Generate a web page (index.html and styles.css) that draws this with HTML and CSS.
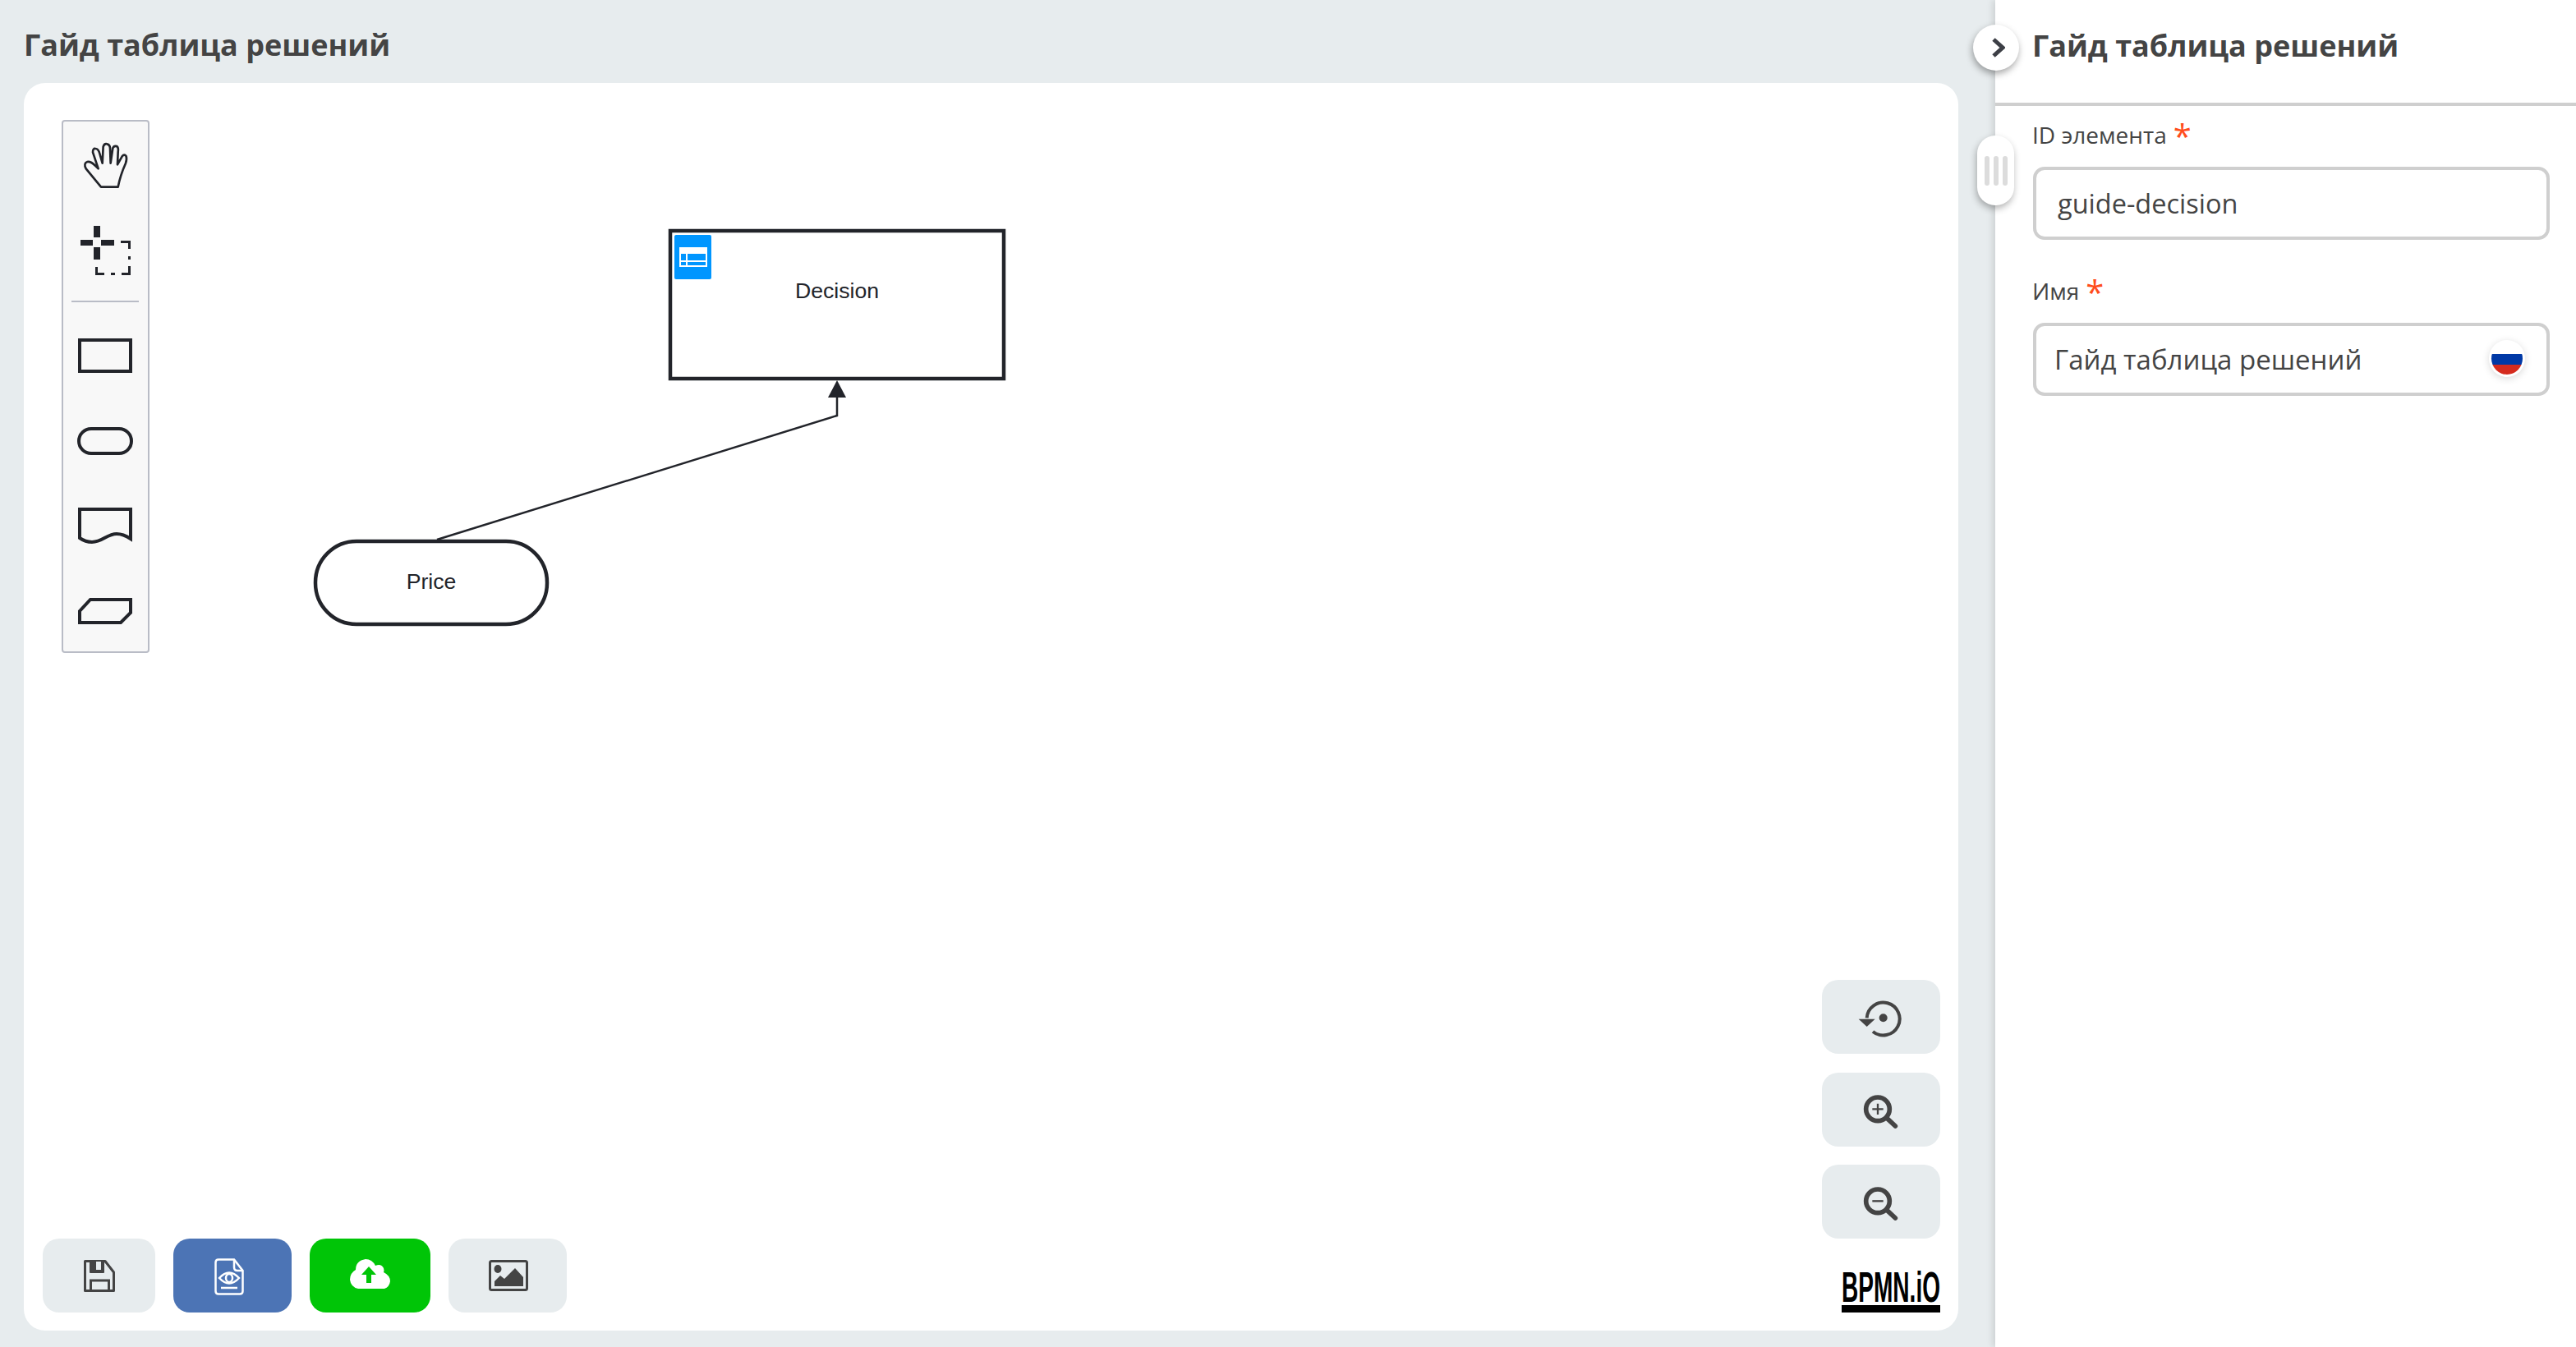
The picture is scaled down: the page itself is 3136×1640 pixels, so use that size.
FILE: index.html
```html
<!DOCTYPE html>
<html lang="ru">
<head>
    <meta charset="UTF-8">
    <meta name="viewport" content="width=device-width, initial-scale=1.0">
    <title>Гайд таблица решений</title>
    <link rel="stylesheet" href="styles.css">
</head>
<body>
    <main class="editor">
        <h1 class="page-title">Гайд таблица решений</h1>

        <div class="canvas-card">
            <!-- viewBox follows page coordinates so the nodes are easy to place -->
            <svg class="diagram" viewBox="29 101 2355 1519">
                <rect class="node" x="816" y="281" width="406" height="180"/>
                <rect x="821" y="286" width="45" height="54" rx="2" fill="#0096ff"/>
                <rect x="827" y="301" width="34" height="24" fill="#fff"/>
                <path fill="#0096ff" d="M829 309h6v8h-6zM837 309h22v8h-22zM829 319h6v4h-6zM837 319h22v4h-22z"/>
                <text class="node-label" x="1019" y="363">Decision</text>

                <rect class="node" x="384" y="659" width="282" height="101" rx="50" ry="50"/>
                <text class="node-label" x="525" y="717">Price</text>

                <polyline class="edge" points="532,657 1019,506 1019,480"/>
                <polygon points="1019,463 1030,484 1008,484" fill="#22242a"/>
            </svg>

            <div class="palette">
                <div class="palette-entry">
                    <svg class="tool-icon hand-icon" width="60" height="60" viewBox="110 125 180 180">
                        <path d="M185 292L130 225Q120 205 135 200Q148 198 165 215L175 225L155 165Q155 150 165 152Q175 152 180 170L190 205L193 145Q197 132 207 135Q217 137 218 150L220 205L228 150Q232 140 242 143Q250 148 247 165L245 210L262 180Q270 170 277 180Q280 190 275 205Q255 250 247 292Z"/>
                    </svg>
                </div>
                <div class="palette-entry">
                    <svg width="61" height="60" viewBox="0 0 61 60">
                        <path fill="#22242a" d="M16 0h8v14h-8zM16 26h8v15h-8zM0 17h15v7H0zM25 17h16v7H25z"/>
                        <path class="dash-box" d="M49 19.500H59.500V28M59.500 37V41M59.500 49V58.500H50M42 58.500H37M29 58.500H19.500V50"/>
                    </svg>
                </div>
                <div class="palette-sep"></div>
                <div class="palette-entry">
                    <svg class="tool-icon" width="66" height="42" viewBox="0 0 66 42"><rect x="2" y="2" width="62" height="38"/></svg>
                </div>
                <div class="palette-entry">
                    <svg class="tool-icon" width="68" height="34" viewBox="0 0 68 34"><rect x="2" y="2" width="64" height="30" rx="15"/></svg>
                </div>
                <div class="palette-entry">
                    <svg class="tool-icon" width="66" height="44" viewBox="0 0 66 44"><path d="M2 2H64V38Q55 32 47 32C35 32 30 42 17 42Q9 42 2 37Z"/></svg>
                </div>
                <div class="palette-entry">
                    <svg class="tool-icon" width="66" height="32" viewBox="0 0 66 32"><path d="M15 2H64V18L52 30H2V16Z"/></svg>
                </div>
            </div>

            <div class="view-controls">
                <button class="btn btn-zoom" type="button">
                    <svg class="zoom-icon" width="60" height="60" viewBox="240 114 180 180">
                        <path d="M300 258A60 60 0 1 0 278 208"/>
                        <circle class="solid" cx="338" cy="208" r="15"/>
                        <polygon class="solid" points="248,212 308,212 278,240"/>
                    </svg>
                </button>
                <button class="btn btn-zoom" type="button">
                    <svg class="zoom-icon" width="60" height="60" viewBox="240 450 180 180">
                        <circle class="lens" cx="318" cy="538" r="43"/>
                        <path class="lens" d="M352 572L382 600" stroke-linecap="round"/>
                        <path class="thin" d="M318 518V558M298 538H338"/>
                    </svg>
                </button>
                <button class="btn btn-zoom" type="button">
                    <svg class="zoom-icon" width="60" height="60" viewBox="240 450 180 180">
                        <circle class="lens" cx="318" cy="538" r="43"/>
                        <path class="lens" d="M352 572L382 600" stroke-linecap="round"/>
                        <path class="thin" d="M298 538H338"/>
                    </svg>
                </button>
                <div class="powered-by"><span>BPMN.iO</span></div>
            </div>

            <div class="actions">
                <button class="btn btn-save" type="button">
                    <svg width="38" height="39" viewBox="0 0 38 39" fill="none" stroke="#444" stroke-width="3">
                        <path d="M1.500 1.500H26L36.500 15V37.500H1.500Z" stroke-linejoin="round"/>
                        <path d="M7 1.500H25V15Q25 16 24 16H8Q7 16 7 15Z" fill="#444" stroke="none"/>
                        <rect x="15" y="2" width="6" height="10" fill="#e7ecee" stroke="none"/>
                        <path d="M8.500 38V25H30.500V38"/>
                    </svg>
                </button>
                <button class="btn btn-preview" type="button">
                    <svg width="36" height="45" viewBox="0 0 36 45" fill="none" stroke="#fff" stroke-width="2.500">
                        <path d="M24 1.500H5Q1.500 1.500 1.500 5V40Q1.500 43.500 5 43.500H31Q34.500 43.500 34.500 40V15Z"/>
                        <path d="M24 1.500V11Q24 15 28 15H34.500"/>
                        <path d="M6 24Q18 11 30 24Q18 37 6 24Z"/>
                        <ellipse cx="18" cy="24" rx="4" ry="5"/>
                        <path d="M8 36H28"/>
                    </svg>
                </button>
                <button class="btn btn-publish" type="button">
                    <svg width="49" height="36" viewBox="0 0 49 36">
                        <path fill="#fff" d="M10 36Q1 34 0 25Q0 17 7 13Q7 2 19 0Q27 0 31 8Q38 5 41 11Q42 14 41 16Q49 20 49 27Q48 34 42 36Z"/>
                        <path fill="#00c507" d="M23 9L32 19H26V29H20V19H14Z"/>
                    </svg>
                </button>
                <button class="btn btn-image" type="button">
                    <svg width="48" height="38" viewBox="0 0 48 38">
                        <rect x="1.500" y="1.500" width="45" height="35" rx="2" fill="none" stroke="#444" stroke-width="3"/>
                        <ellipse cx="11" cy="11" rx="4.500" ry="5" fill="#444"/>
                        <path fill="#444" d="M7 32V26L14 19L19 23L32 10L42 21V32Z"/>
                    </svg>
                </button>
            </div>
        </div>
    </main>

    <aside class="sidebar">
        <button class="sidebar-toggle" type="button">
            <svg width="16" height="24" viewBox="0 0 16 24" fill="none" stroke="#3d3f46" stroke-width="5"><path d="M2 2L13 12L2 22"/></svg>
        </button>
        <div class="sidebar-grip"><i></i><i></i><i></i></div>

        <h2 class="sidebar-title">Гайд таблица решений</h2>

        <form class="props-form">
            <div class="form-group">
                <label for="elementId">ID элемента <span class="required">*</span></label>
                <input class="field" id="elementId" type="text" value="guide-decision">
            </div>
            <div class="form-group">
                <label for="elementName">Имя <span class="required">*</span></label>
                <div class="field-wrap">
                    <input class="field field-lang" id="elementName" type="text" value="Гайд таблица решений">
                    <span class="lang-flag"><span class="lang-flag-inner"></span></span>
                </div>
            </div>
        </form>
    </aside>
</body>
</html>
```

FILE: styles.css
```css
:root {
    --bg-color: #e7ecee;
    --text-color: #444444;
    --line-color: #cfcfcf;
    --ink-color: #22242a;
    --palette-border: #b9bcc6;
}

* {
    margin: 0;
    padding: 0;
    box-sizing: border-box;
}

body {
    display: flex;
    height: 100vh;
    overflow: hidden;
    background-color: var(--bg-color);
    color: var(--text-color);
    font-family: "Open Sans", sans-serif;
}

.editor {
    flex: 1;
    min-width: 0;
    display: flex;
    flex-direction: column;
    padding: 0 45px 20px 29px;
}

.page-title {
    height: 101px;
    padding-top: 8px;
    display: flex;
    align-items: center;
    font-size: 36px;
    font-weight: 700;
}

.canvas-card {
    position: relative;
    flex: 1;
    background-color: #fff;
    border-radius: 26px;
    overflow: hidden;
}

/* Diagram */
.diagram {
    position: absolute;
    top: 0;
    left: 0;
    width: 100%;
    height: 100%;
}

.node {
    fill: #fff;
    stroke: var(--ink-color);
    stroke-width: 4.5;
}

.node-label {
    font-family: "Liberation Sans", sans-serif;
    font-size: 26.67px;
    fill: var(--ink-color);
    text-anchor: middle;
}

.edge {
    fill: none;
    stroke: var(--ink-color);
    stroke-width: 2.500;
}

/* Palette */
.palette {
    position: absolute;
    top: 45px;
    left: 46px;
    width: 107px;
    height: 649px;
    padding: 2px 1px 0 0;
    background-color: #f8f8f8;
    border: 2px solid var(--palette-border);
    border-radius: 4px;
}

.palette-entry {
    height: 103.500px;
    display: flex;
    align-items: center;
    justify-content: center;
}

.palette-sep {
    height: 2px;
    margin: 9px 10px 13.500px;
    background-color: var(--palette-border);
}

.tool-icon {
    fill: none;
    stroke: var(--ink-color);
    stroke-width: 4;
}

.hand-icon {
    stroke-width: 8;
    stroke-linejoin: round;
}

.dash-box {
    fill: none;
    stroke: var(--ink-color);
    stroke-width: 3;
}

/* Buttons */
.btn {
    display: flex;
    align-items: center;
    justify-content: center;
    height: 90px;
    border: none;
    border-radius: 20px;
    background-color: var(--bg-color);
}

.btn-save {
    width: 137px;
}

.btn-preview {
    width: 144px;
    background-color: #4c74b5;
}

.btn-preview svg {
    margin: 3px 9px 0 0;
}

.btn-publish {
    width: 147px;
    background-color: #00c507;
}

.btn-publish svg {
    margin-bottom: 4px;
}

.btn-image {
    width: 144px;
}

.btn-image svg {
    margin-left: 2px;
}

.btn-zoom {
    width: 144px;
}

.actions {
    position: absolute;
    left: 23px;
    bottom: 22px;
    display: flex;
    gap: 22px;
}

.view-controls {
    position: absolute;
    right: 22px;
    bottom: 22px;
    display: flex;
    flex-direction: column;
    gap: 22.500px;
}

.zoom-icon {
    fill: none;
    stroke: var(--text-color);
    stroke-width: 12;
}

.zoom-icon .solid {
    fill: var(--text-color);
    stroke: none;
}

.zoom-icon .lens {
    stroke-width: 17;
}

.zoom-icon .thin {
    stroke-width: 7;
}

.powered-by {
    width: 120px;
    height: 48px;
    margin-top: 19.500px;
    margin-left: 24px;
    border-bottom: 9px solid #000;
    color: #000;
    font-family: "Liberation Sans", sans-serif;
    font-size: 51px;
    font-weight: 700;
    line-height: 36px;
    white-space: nowrap;
}

.powered-by span {
    display: inline-block;
    transform: scaleX(0.55);
    transform-origin: left center;
}

/* Sidebar */
.sidebar {
    position: relative;
    width: 707px;
    padding: 0 32px 0 46px;
    background-color: #fff;
    box-shadow: -3px 0 8px rgba(0, 0, 0, 0.12);
}

.sidebar::before {
    content: "";
    position: absolute;
    top: 125px;
    left: 0;
    right: 0;
    height: 4px;
    background-color: var(--line-color);
}

.sidebar-title {
    height: 125px;
    padding-bottom: 15px;
    display: flex;
    align-items: center;
    margin-left: -1px;
    font-size: 36px;
    font-weight: 700;
}

.sidebar-toggle {
    position: absolute;
    top: 30px;
    left: -27px;
    width: 56px;
    height: 56px;
    display: flex;
    align-items: center;
    justify-content: center;
    padding-left: 6px;
    border: none;
    border-radius: 50%;
    background-color: #fff;
    box-shadow: -1px 4px 8px rgba(0, 0, 0, 0.35);
}

.sidebar-grip {
    position: absolute;
    top: 165px;
    left: -22px;
    width: 45px;
    height: 85px;
    display: flex;
    align-items: center;
    justify-content: center;
    gap: 5px;
    border-radius: 22px;
    background-color: #fff;
    box-shadow: -1px 4px 8px rgba(0, 0, 0, 0.3);
}

.sidebar-grip i {
    width: 6px;
    height: 36px;
    border-radius: 3px;
    background-color: #dcdcdc;
}

.props-form {
    padding-top: 19px;
}

.form-group {
    margin-bottom: 42px;
}

label {
    display: flex;
    align-items: flex-end;
    gap: 8px;
    height: 59px;
    padding-bottom: 20px;
    margin-left: -1px;
    font-size: 28px;
}

.required {
    align-self: flex-start;
    color: #ff4d1c;
    font-size: 40px;
    line-height: 40px;
    padding-top: 2px;
}

.field-wrap {
    position: relative;
}

.field {
    display: block;
    width: 100%;
    height: 89px;
    padding: 0 26px;
    border: 4px solid var(--line-color);
    border-radius: 14px;
    background-color: #fff;
    color: var(--text-color);
    font-family: "Open Sans", sans-serif;
    font-size: 32.500px;
    outline: none;
}

.field-lang {
    padding: 0 70px 0 22px;
    font-size: 33px;
}

.lang-flag {
    position: absolute;
    top: 21px;
    right: 30px;
    width: 44px;
    height: 45px;
    padding: 3px;
    border-radius: 50%;
    background-color: #fff;
    box-shadow: 0 2px 10px rgba(0, 0, 0, 0.15);
}

.lang-flag-inner {
    display: block;
    width: 100%;
    height: 100%;
    border-radius: 50%;
    background: linear-gradient(#fff 0 35%, #0039a6 35% 68%, #d52b1e 68%);
}
```
